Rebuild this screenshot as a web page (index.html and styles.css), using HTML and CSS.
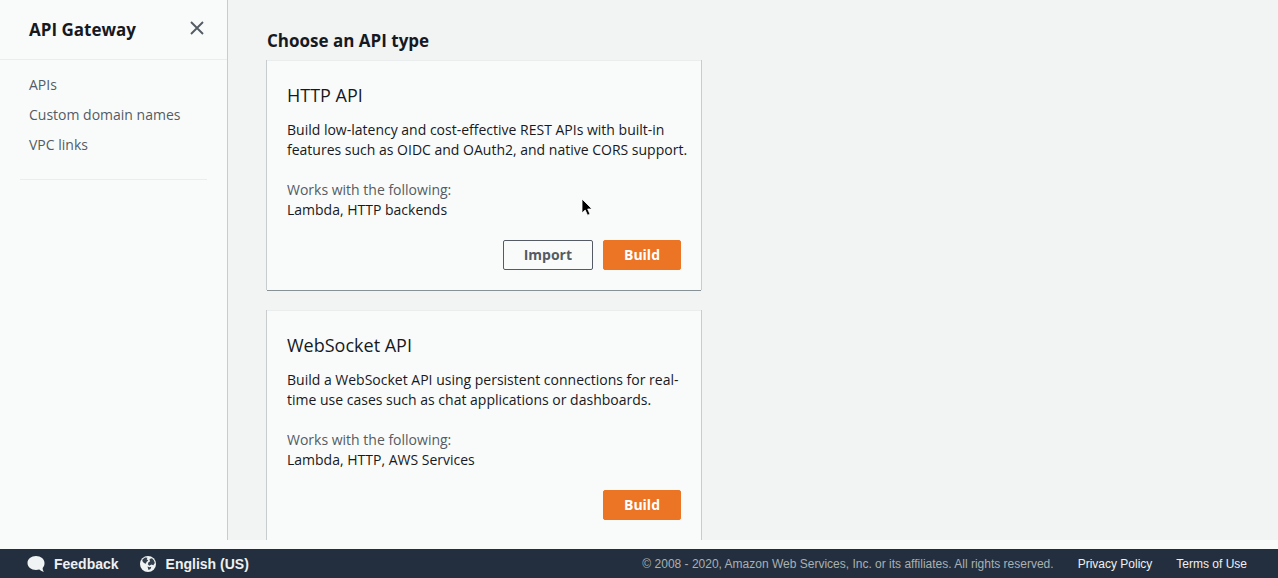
FILE: index.html
```html
<!DOCTYPE html>
<html lang="en">
<head>
<meta charset="utf-8">
<title>API Gateway</title>
<link rel="stylesheet" href="styles.css">
</head>
<body>
<div class="app">
  <aside class="sidebar">
    <header class="sidebar-header">
      <h2 class="sidebar-title">API Gateway</h2>
      <button class="close" type="button" aria-label="Close navigation">
        <svg width="16" height="16" viewBox="0 0 16 16" fill="none" stroke="currentColor" stroke-width="1.9"><path d="M2 2l12 12M14 2L2 14"/></svg>
      </button>
    </header>
    <nav class="nav">
      <a href="#apis">APIs</a>
      <a href="#domains">Custom domain names</a>
      <a href="#vpc">VPC links</a>
    </nav>
  </aside>
  <main class="main">
    <h1 class="heading">Choose an API type</h1>
    <div class="cards">
      <section class="card">
        <h2 class="card-title">HTTP API</h2>
        <p class="text">Build low-latency and cost-effective REST APIs with built-in features such as OIDC and OAuth2, and native CORS support.</p>
        <dl class="works">
          <dt>Works with the following:</dt>
          <dd>Lambda, HTTP backends</dd>
        </dl>
        <div class="actions">
          <button class="btn" type="button">Import</button>
          <button class="btn primary" type="button">Build</button>
        </div>
      </section>
      <section class="card">
        <h2 class="card-title">WebSocket API</h2>
        <p class="text">Build a WebSocket API using persistent connections for real-time use cases such as chat applications or dashboards.</p>
        <dl class="works">
          <dt>Works with the following:</dt>
          <dd>Lambda, HTTP, AWS Services</dd>
        </dl>
        <div class="actions">
          <button class="btn primary" type="button">Build</button>
        </div>
      </section>
    </div>
  </main>
</div>
<footer class="footer">
  <div class="footer-group tools">
    <button class="tool" type="button">
      <svg width="18" height="18" viewBox="0 0 18 18" fill="#f0f3f3"><path d="M9 1C4.200 1 .5 4 .5 8s3.700 7 8.500 7c1.200 0 2.300-.2 3.300-.5 1.300 1.300 2.900 2 4.700 2.300-1-1.100-1.400-2.400-1.300-3.900C17 11.600 17.500 9.900 17.500 8c0-4-3.700-7-8.500-7z"/></svg>
      Feedback
    </button>
    <button class="tool" type="button">
      <svg width="18" height="18" viewBox="0 0 18 18"><circle cx="9" cy="9" r="8" fill="#f0f3f3"/><path fill="#35414e" d="M3.500 4.500L6 2.500l2.500.3-.8 1.400 1.500 1.300-1.700 1.500-.6 1.800-2-.8L3.300 6zM10.500 4l2.500-.8 2 2.300.8 2.500-1.500 2.200-1.800-.6-2.200 1.200-1.500-1.500.7-2 1.500-.8zM8.500 11.500l2 .7 1.800-.4-.8 2.200-2 1z"/></svg>
      English (US)
    </button>
  </div>
  <div class="footer-group legal">
    <span class="copyright">© 2008 - 2020, Amazon Web Services, Inc. or its affiliates. All rights reserved.</span>
    <a href="#privacy">Privacy Policy</a>
    <a href="#terms">Terms of Use</a>
  </div>
</footer>
<svg class="pointer" width="14" height="20" viewBox="0 0 14 20" aria-hidden="true"><path d="M1 1v14l3.200-3 2.300 5.200 2.500-1-2.300-5.200H11z" fill="#000" stroke="#fff" stroke-width=".8"/></svg>
</body>
</html>
```
FILE: styles.css
```css
* { box-sizing: border-box; }
body {
  margin: 0;
  height: 100vh;
  display: flex;
  flex-direction: column;
  overflow: hidden;
  background: #f9fbfa;
  color: #16191f;
  font: 14px/20px "Open Sans", "Noto Sans", sans-serif;
}
h1, h2, p, dl, dd { margin: 0; }
a { color: inherit; text-decoration: none; }
button { font: inherit; cursor: pointer; }

.app { flex: 1; min-height: 0; display: flex; margin-bottom: 9px; }

.sidebar { flex: 0 0 228px; border-right: 1px solid #c8cccc; }
.sidebar-header {
  display: flex;
  justify-content: space-between;
  align-items: center;
  height: 60px;
  padding: 1px 20px 0 29px;
  border-bottom: 1px solid #eaeded;
}
.sidebar-title, .heading { font-size: 17px; line-height: 22px; font-weight: 700; }
.close {
  display: flex;
  padding: 2px;
  margin-bottom: 4px;
  border: 0;
  background: none;
  color: #545b64;
}
.nav {
  display: flex;
  flex-direction: column;
  gap: 10px;
  margin: 0 20px;
  padding: 15px 9px 24px;
  border-bottom: 1px solid #eaeded;
  color: #545b64;
}

.main { flex: 1; overflow: hidden; padding: 30px 39px 0; background: #f2f3f3; }
.heading { margin-bottom: 8px; }
.cards { display: grid; gap: 20px; max-width: 434px; }
.card {
  padding: 20px;
  background: #f9fbfa;
  box-shadow: inset 0 1px 0 #eaeded, 0 1px 0 #879196, 1px 0 0 #c8cccc, -1px 0 0 #c8cccc;
}
.card-title { margin-bottom: 10px; font-size: 18px; line-height: 30px; font-weight: 400; }
.text { margin-right: -8px; }
.works { margin: 20px 0; }
.works dt { color: #545b64; }
.actions { display: flex; justify-content: flex-end; gap: 10px; }
.btn {
  height: 30px;
  padding: 0 20px;
  border: 1px solid #545b64;
  border-radius: 2px;
  background: #f9fbfa;
  color: #545b64;
  font-weight: 700;
}
.primary { border-color: #ec7425; background: #ec7425; color: #fff; }

.footer {
  flex: 0 0 29px;
  display: flex;
  justify-content: space-between;
  align-items: center;
  padding: 0 31px 0 27px;
  background: #232f3e;
  color: #eef1f1;
  font: 12px/20px "Liberation Sans", Arial, sans-serif;
}
.footer-group { display: flex; align-items: center; }
.tools { gap: 20px; }
.legal { gap: 24px; }
.tool {
  display: flex;
  align-items: center;
  gap: 9px;
  padding: 0;
  border: 0;
  background: none;
  color: inherit;
  font-size: 14px;
  font-weight: 700;
}
.copyright { color: #a9b1b3; }
.pointer { position: absolute; left: 581px; top: 198px; }
```
